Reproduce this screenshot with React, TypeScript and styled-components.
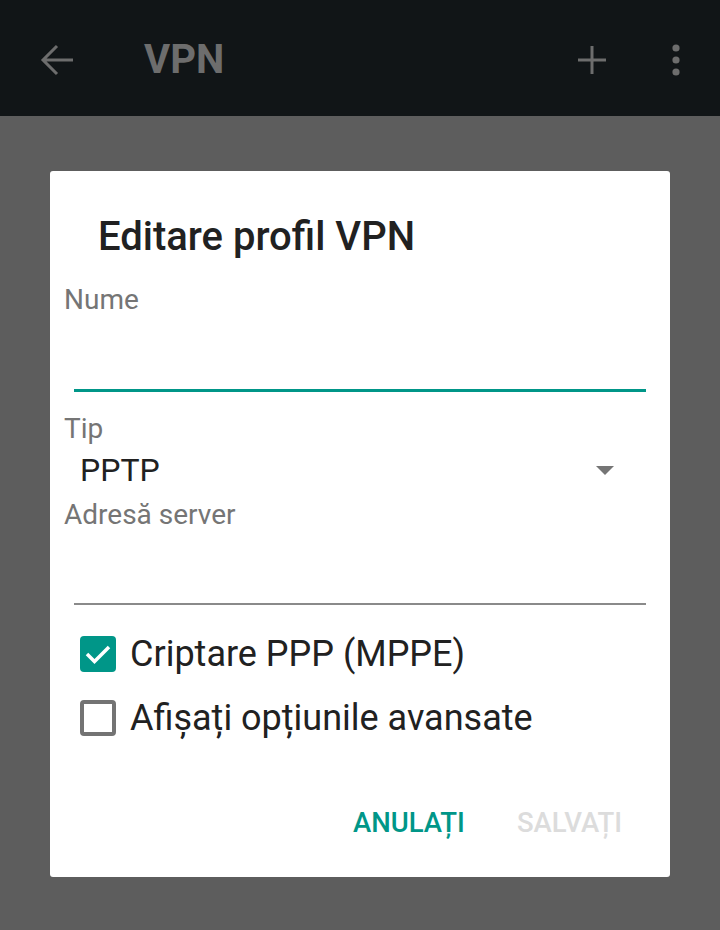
import React from 'react'
import styled, { createGlobalStyle } from 'styled-components'

//Global
const GlobalStyle = createGlobalStyle`
  html, body {
    margin: 0;
    padding: 0;
    background: #5d5d5d;
    font-family: Roboto, "Noto Sans", sans-serif;
  }
  * {
    box-sizing: border-box;
  }
`

//Styled Components
const Page = styled.div`
  width: 720px;
  height: 930px;
  display: flex;
  flex-direction: column;
  background: #5d5d5d;
  overflow: hidden;
`

const Toolbar = styled.header`
  height: 116px;
  flex-shrink: 0;
  background: #111517;
  display: flex;
  align-items: center;
  padding: 4px 40px 0 40px;
`

const ToolbarTitle = styled.h1`
  margin: 0 0 0 70px;
  font-size: 40px;
  line-height: 1;
  font-weight: 700;
  color: #6d6d6d;
  flex: 1;
`

const ToolbarActions = styled.div`
  display: flex;
  align-items: center;
  gap: 66px;
`

const Scrim = styled.main`
  flex: 1;
  padding: 55px 50px 0 50px;
`

const Dialog = styled.section`
  width: 620px;
  height: 706px;
  background: #ffffff;
  border-radius: 3px;
  padding: 43px 0 0 0;
  display: flex;
  flex-direction: column;
`

const DialogTitle = styled.h2`
  margin: 0 0 24px 48px;
  font-size: 40px;
  line-height: 46px;
  font-weight: 500;
  color: #212121;
`

const Form = styled.div`
  display: flex;
  flex-direction: column;
  padding: 0 24px 0 14px;
`

const Label = styled.div<{ $gap?: number }>`
  font-size: 28px;
  line-height: 32px;
  color: #757575;
  margin-top: ${(p) => p.$gap ?? 0}px;
`

const Input = styled.div<{ $focused?: boolean }>`
  margin-left: 10px;
  height: ${(p) => (p.$focused ? 76 : 74)}px;
  border-bottom: ${(p) => (p.$focused ? '3px solid #009688' : '2px solid #8a8a8a')};
`

const SelectRow = styled.div`
  display: flex;
  align-items: center;
  justify-content: space-between;
  margin: 6px 32px 10px 16px;
  height: 38px;
`

const SelectValue = styled.span`
  font-size: 32px;
  line-height: 38px;
  color: #212121;
`

const Checks = styled.div`
  display: flex;
  flex-direction: column;
  margin: 17px 0 0 30px;
`

const CheckRow = styled.label`
  display: flex;
  align-items: center;
  height: 64px;
  gap: 14px;
`

const Box = styled.span<{ $checked?: boolean }>`
  width: 36px;
  height: 36px;
  border-radius: 4px;
  flex-shrink: 0;
  display: flex;
  align-items: center;
  justify-content: center;
  background: ${(p) => (p.$checked ? '#009688' : 'transparent')};
  border: ${(p) => (p.$checked ? 'none' : '4px solid #737373')};
`

const CheckText = styled.span`
  font-size: 36px;
  line-height: 40px;
  color: #212121;
`

const Actions = styled.div`
  margin-top: 55px;
  display: flex;
  justify-content: flex-end;
  gap: 52px;
  padding-right: 48px;
`

const ActionButton = styled.button<{ $disabled?: boolean }>`
  border: none;
  background: none;
  padding: 0;
  font-family: Roboto, "Noto Sans", sans-serif;
  font-size: 27.5px;
  line-height: 36px;
  font-weight: 500;
  color: ${(p) => (p.$disabled ? '#dcdcdc' : '#009688')};
`

//Icons
const BackIcon = () => (
  <svg width="34" height="32" viewBox="0 0 34 32">
    <path d="M33 16H3M17 2L3 16l14 14" fill="none" stroke="#6d6d6d" strokeWidth="3" />
  </svg>
)

const PlusIcon = () => (
  <svg width="28" height="28" viewBox="0 0 28 28">
    <path d="M14 0v28M0 14h28" stroke="#6d6d6d" strokeWidth="3" />
  </svg>
)

const MoreIcon = () => (
  <svg width="8" height="32" viewBox="0 0 8 32">
    <circle cx="4" cy="4" r="3.6" fill="#6d6d6d" />
    <circle cx="4" cy="16" r="3.6" fill="#6d6d6d" />
    <circle cx="4" cy="28" r="3.6" fill="#6d6d6d" />
  </svg>
)

const Caret = () => (
  <svg width="18" height="9" viewBox="0 0 18 9">
    <path d="M0 0h18L9 9z" fill="#757575" />
  </svg>
)

const Tick = () => (
  <svg width="26" height="20" viewBox="0 0 26 20">
    <path d="M2 10l7.5 7.5L24 3" fill="none" stroke="#ffffff" strokeWidth="3.5" />
  </svg>
)

//React Component
export default function App() {
  return (
    <>
      <GlobalStyle />
      <Page>
        <Toolbar>
          <BackIcon />
          <ToolbarTitle>VPN</ToolbarTitle>
          <ToolbarActions>
            <PlusIcon />
            <MoreIcon />
          </ToolbarActions>
        </Toolbar>
        <Scrim>
          <Dialog>
            <DialogTitle>Editare profil VPN</DialogTitle>
            <Form>
              <Label>Nume</Label>
              <Input $focused />
              <Label $gap={21}>Tip</Label>
              <SelectRow>
                <SelectValue>PPTP</SelectValue>
                <Caret />
              </SelectRow>
              <Label>Adresă server</Label>
              <Input />
            </Form>
            <Checks>
              <CheckRow>
                <Box $checked>
                  <Tick />
                </Box>
                <CheckText>Criptare PPP (MPPE)</CheckText>
              </CheckRow>
              <CheckRow>
                <Box />
                <CheckText>Afișați opțiunile avansate</CheckText>
              </CheckRow>
            </Checks>
            <Actions>
              <ActionButton>ANULAȚI</ActionButton>
              <ActionButton $disabled>SALVAȚI</ActionButton>
            </Actions>
          </Dialog>
        </Scrim>
      </Page>
    </>
  )
}
